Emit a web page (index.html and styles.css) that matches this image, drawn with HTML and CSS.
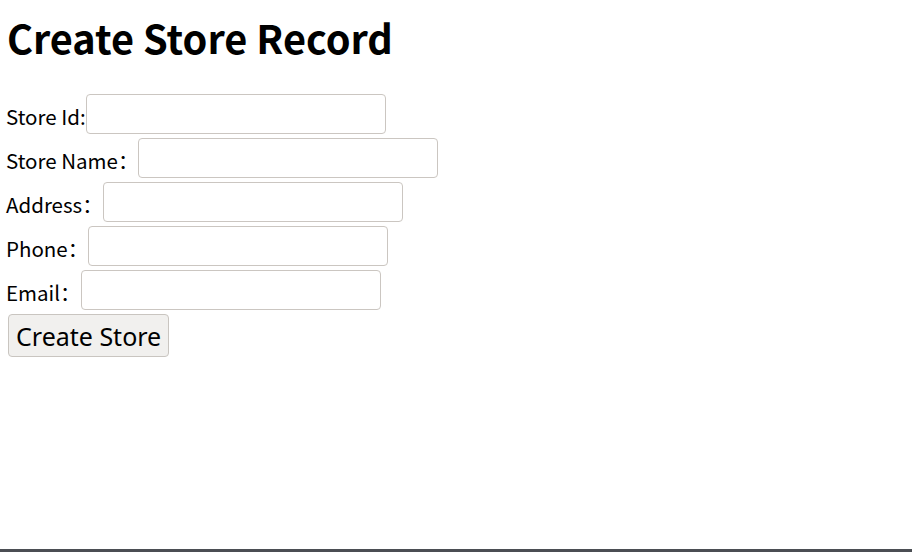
FILE: index.html
```html
<!DOCTYPE html>
<html lang="en">
<head>
<meta charset="utf-8">
<title>Create Store Record</title>
<link rel="stylesheet" href="styles.css">
</head>
<body>
<div class="page">
  <main class="content">
    <h1 class="title">Create Store Record</h1>
    <form class="store-form">
      <div class="row"><label class="label" for="sid">Store Id:</label><input class="field" id="sid" type="text"></div>
      <div class="row"><label class="label" for="sname">Store Name：</label><input class="field" id="sname" type="text"></div>
      <div class="row"><label class="label" for="addr">Address：</label><input class="field" id="addr" type="text"></div>
      <div class="row"><label class="label" for="phone">Phone：</label><input class="field" id="phone" type="text"></div>
      <div class="row"><label class="label" for="email">Email：</label><input class="field" id="email" type="text"></div>
      <div class="row"><button class="submit" type="button">Create Store</button></div>
    </form>
  </main>
  <div class="bottom-bar"></div>
</div>
</body>
</html>
```

FILE: styles.css
```css
html, body {
  margin: 0;
  padding: 0;
  background: #ffffff;
}
.page {
  min-height: 100vh;
  display: flex;
  flex-direction: column;
}
.content {
  padding: 8px 6px 0 6px;
  font-family: "Noto Sans CJK SC", "Noto Sans", sans-serif;
  color: #000;
}
.title {
  font-size: 39.7px;
  font-weight: 700;
  line-height: 58px;
  margin: 0 0 28px 1px;
}
.store-form {
  margin: 0;
}
.row {
  display: flex;
  align-items: center;
  height: 40px;
  margin-bottom: 4px;
}
.label {
  font-size: 20.5px;
  line-height: 28px;
  padding-top: 4px;
  white-space: pre;
}
.field {
  box-sizing: border-box;
  width: 300px;
  height: 40px;
  border: 1px solid #cbc6c1;
  border-radius: 4px;
  padding: 0 8px;
  margin: 0;
  font-size: 20px;
  background: #fff;
}
.submit {
  box-sizing: border-box;
  margin: 0 0 0 2px;
  height: 43px;
  padding: 0 7px;
  font-family: "Noto Sans", "Open Sans", sans-serif;
  font-size: 25px;
  color: #000;
  background: #f1f0ee;
  border: 1px solid #c9c5c0;
  border-radius: 4px;
  align-self: flex-start;
}
.bottom-bar {
  margin-top: auto;
  height: 3px;
  background: #4b4e53;
}
```
